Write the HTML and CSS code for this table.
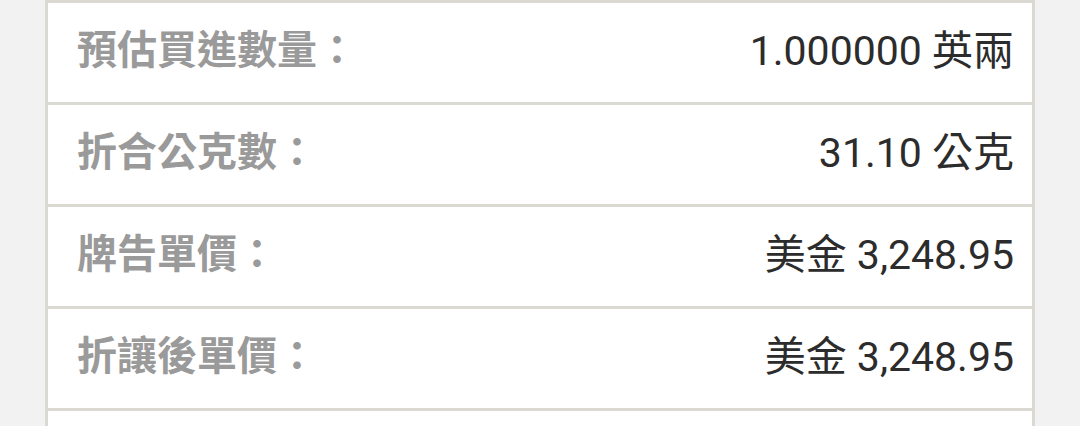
FILE: index.html
```html
<!DOCTYPE html>
<html lang="zh-Hant">
<head>
<meta charset="utf-8">
<title>預估買進</title>
<link rel="stylesheet" href="styles.css">
</head>
<body>
<div class="table">
  <div class="row"><span class="label">預估買進數量：</span><span class="value">1.000000 英兩</span></div>
  <div class="row"><span class="label">折合公克數：</span><span class="value">31.10 公克</span></div>
  <div class="row"><span class="label">牌告單價：</span><span class="value">美金 3,248.95</span></div>
  <div class="row"><span class="label">折讓後單價：</span><span class="value">美金 3,248.95</span></div>
  <div class="row"></div>
</div>
</body>
</html>
```

FILE: styles.css
```css
html, body {
  margin: 0;
  padding: 0;
  background: #f2f2f2;
}
body {
  width: 1080px;
  height: 426px;
  overflow: hidden;
  font-family: Roboto, "Noto Sans CJK TC", sans-serif;
}
.table {
  margin-left: 45px;
  width: 984px;
  background: #ffffff;
  border-left: 3px solid #dadad3;
  border-right: 3px solid #dadad3;
}
.row {
  height: 99px;
  border-top: 3px solid #dadad3;
  display: flex;
  align-items: center;
  justify-content: space-between;
  padding: 0 18px 0 29px;
  line-height: 40px;
}
.label {
  font-family: "Noto Sans CJK TC", sans-serif;
  font-size: 40px;
  font-weight: 700;
  color: #9a9a9a;
  padding-bottom: 11px;
}
.value {
  font-size: 41px;
  color: #2c2c2c;
  padding-bottom: 3px;
}
```
